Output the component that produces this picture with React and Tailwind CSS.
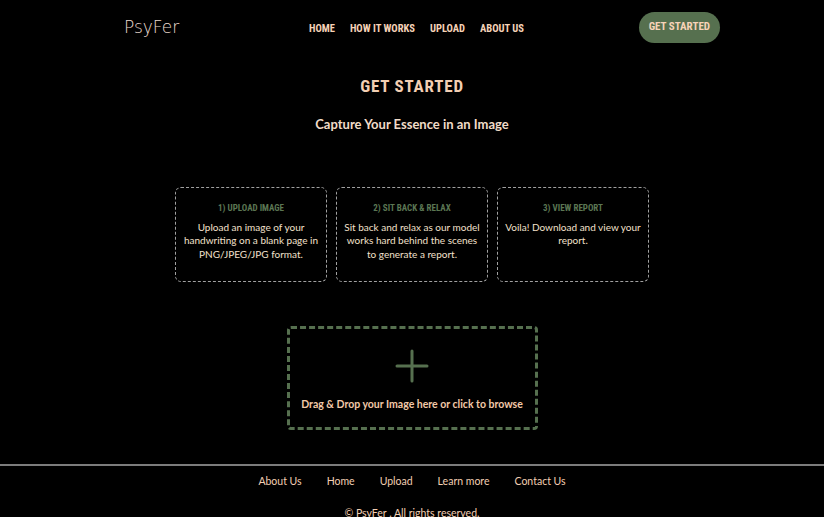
import React from "react";

const display = {
  fontFamily: '"Roboto Condensed", "Noto Sans", "DejaVu Sans", sans-serif',
  fontStretch: "condensed",
};
const body = { fontFamily: 'Lato, "Open Sans", sans-serif' };

const steps = [
  {
    title: "1) Upload Image",
    text: "Upload an image of your handwriting on a blank page in PNG/JPEG/JPG format.",
  },
  {
    title: "2) Sit Back & Relax",
    text: "Sit back and relax as our model works hard behind the scenes to generate a report.",
  },
  {
    title: "3) View Report",
    text: "Voila! Download and view your report.",
  },
];

const App = () => {
  return (
    <div className="min-h-screen bg-black text-[#f3cfb3] overflow-hidden" style={body}>
      {/* Navbar */}
      <nav className="flex items-center h-[55px] pl-[124px] pr-[104px]">
        <div className="text-[17px] text-[#ecdcd0] w-[185px]" style={{ fontFamily: '"DejaVu Sans", sans-serif', fontWeight: 300 }}>
          PsyFer
        </div>
        <ul className="flex gap-[15px] pt-[2px] text-[10.5px] font-bold uppercase whitespace-nowrap text-[#f6d3b8]" style={display}>
          <li>Home</li>
          <li>How it works</li>
          <li>Upload</li>
          <li>About us</li>
        </ul>
        <button
          className="ml-auto h-[31px] px-[10px] rounded-full bg-[#56704f] text-[11px] font-bold uppercase whitespace-nowrap text-[#f6d3b8]"
          style={display}
        >
          Get Started
        </button>
      </nav>

      {/* Heading */}
      <div className="text-center mt-[17px]">
        <h1 className="text-[17px] leading-[28px] font-bold uppercase tracking-[0.8px] text-[#f3cfb3]" style={display}>
          Get Started
        </h1>
        <p className="mt-[15px] text-[13px] font-bold text-[#f1dcc8]">Capture Your Essence in an Image</p>
      </div>

      {/* Steps */}
      <div className="flex justify-center gap-[9px] mt-[52px]">
        {steps.map((s) => (
          <div
            key={s.title}
            className="w-[152px] h-[95px] border border-dashed border-[#a0a0a0] rounded-[6px] px-[6px] pt-[13px] text-center"
          >
            <h3 className="text-[9px] leading-[14px] font-bold uppercase whitespace-nowrap text-[#5b7653]" style={display}>
              {s.title}
            </h3>
            <p className="mt-[6px] text-[10px] leading-[13.5px] text-[#f3e0cc]">{s.text}</p>
          </div>
        ))}
      </div>

      {/* Upload box */}
      <div className="flex justify-center mt-[44px]">
        <div className="w-[251px] h-[104px] border-[3px] border-dashed border-[#56704f] rounded-[4px] flex flex-col items-center pt-[20px] cursor-pointer">
          <svg width="34" height="34" viewBox="0 0 34 34">
            <path d="M17 2v30M2 17h30" stroke="#56704f" strokeWidth="3" strokeLinecap="round" />
          </svg>
          <p className="mt-[14px] text-[10.5px] font-bold text-[#f3c9a8]">
            Drag &amp; Drop your Image here or click to browse
          </p>
        </div>
      </div>

      {/* Footer */}
      <footer className="mt-[34px] border-t-2 border-[#7c7c7c]">
        <ul className="flex justify-center gap-[25px] pt-[8px] text-[10.5px] text-[#f3cfb3]">
          <li>About Us</li>
          <li>Home</li>
          <li>Upload</li>
          <li>Learn more</li>
          <li>Contact Us</li>
        </ul>
        <p className="text-center mt-[17px] text-[10.5px] text-[#f3cfb3]">© PsyFer . All rights reserved.</p>
      </footer>
    </div>
  );
};

export default App;
